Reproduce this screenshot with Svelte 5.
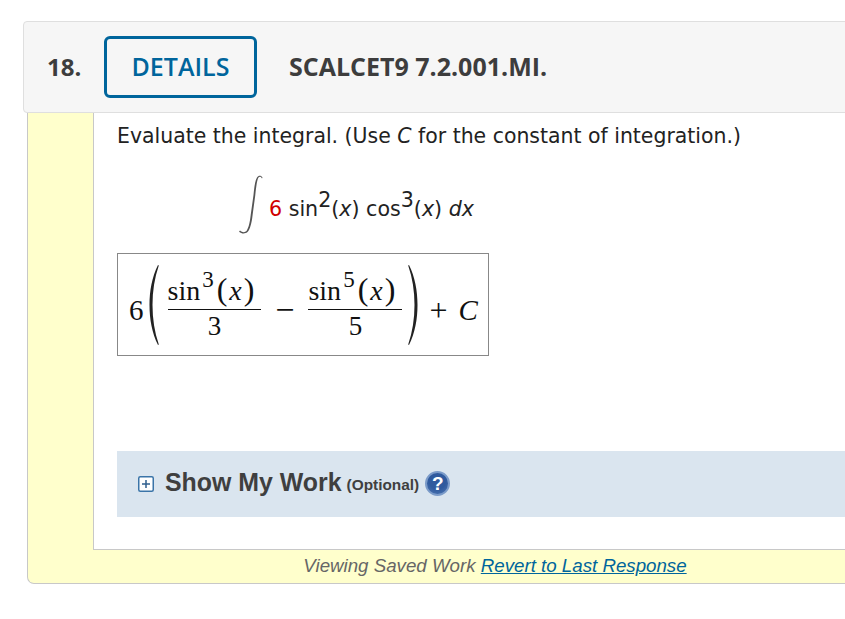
<script>
	const answer_fracs = [
		{ power: 3, denom: 3 },
		{ power: 5, denom: 5 }
	];
</script>

<div class="page">
	<header class="question_head">
		<span class="number">18.</span>
		<button type="button" class="details_btn">DETAILS</button>
		<span class="title">SCALCET9 7.2.001.MI.</span>
	</header>

	<section class="panel">
		<div class="body">
			<p class="prompt">Evaluate the integral. (Use <i>C</i> for the constant of integration.)</p>

			<div class="integral">
				<svg class="int_sign" width="32" height="62" viewBox="0 0 32 62" aria-hidden="true">
					<path d="M30.500 3.500C29 1 26.500 1.200 25 3.500 23 7 22.300 13 21.500 21L18.700 41C17.800 49 16.500 54 14.500 57 13 58.500 10.500 58.700 8 56.500L7 57.700C10 60 13 60 15.500 58 18 55.500 19.700 49 20.600 41L23.300 21C24.300 12 25 6 26.500 3.500 27.500 2.300 29 2.400 30 4.500z" fill="#555" />
				</svg>
				<span class="int_expr"><span class="red">6</span> sin<sup>2</sup>(<i>x</i>) cos<sup>3</sup>(<i>x</i>) <i>dx</i></span>
			</div>

			<div class="answer">
				<span class="m_num">6</span>
				<svg class="paren" width="10" height="80" viewBox="0 0 10 80" aria-hidden="true">
					<path d="M9 0C3 12 .500 26 .500 40S3 68 9 80l.800-.500C5.500 67 3.500 54 3.500 40S5.500 13 9.800.500z" fill="#222" />
				</svg>
				{#each answer_fracs as frac, i}
					{#if i > 0}<span class="m_minus">−</span>{/if}
					<span class="frac">
						<span class="frac_top">sin<sup>{frac.power}</sup><span class="m_paren">(</span><i>x</i><span class="m_paren">)</span></span>
						<span class="frac_bottom">{frac.denom}</span>
					</span>
				{/each}
				<svg class="paren right" width="10" height="80" viewBox="0 0 10 80" aria-hidden="true">
					<path d="M1 0C7 12 9.500 26 9.500 40S7 68 1 80l-.800-.500C4.500 67 6.500 54 6.500 40S4.500 13 .200.500z" fill="#222" />
				</svg>
				<span class="m_plus">+</span>
				<i class="m_c">C</i>
			</div>

			<div class="work_bar">
				<span class="plus_box">
					<svg width="16" height="16" viewBox="0 0 16 16" aria-hidden="true">
						<rect x="0.750" y="0.750" width="14.500" height="14.500" rx="1.500" fill="#fff" stroke="#3a74a8" stroke-width="1.500" />
						<path d="M4 8h8M8 4v8" stroke="#2f5f8f" stroke-width="1.500" fill="none" />
					</svg>
				</span>
				<span class="work_label">Show My Work</span>
				<span class="work_opt">(Optional)</span>
				<span class="help_icon">?</span>
			</div>
		</div>

		<div class="saved_note">
			<i>Viewing Saved Work</i> <a href="#revert">Revert to Last Response</a>
		</div>
	</section>
</div>

<style>
	:global(body) {
		margin: 0;
		background: #fff;
		overflow: hidden;
	}

	.page {
		width: 845px;
		height: 619px;
		overflow: hidden;
		padding-top: 21px;
		box-sizing: border-box;
	}

	.question_head {
		display: flex;
		align-items: center;
		box-sizing: border-box;
		width: 960px;
		height: 92px;
		margin-left: 23px;
		padding-left: 23px;
		background: #f6f6f6;
		border: 1px solid #dfdfdf;
		border-radius: 4px;
		font-family: "Open Sans", sans-serif;
		color: #3d3d3d;
	}

	.number {
		width: 57px;
		padding-bottom: 2px;
		font-size: 24px;
		font-weight: 700;
	}

	.details_btn {
		box-sizing: border-box;
		width: 153px;
		height: 62px;
		padding: 0 0 2px;
		background: transparent;
		border: 3px solid #00659c;
		border-radius: 6px;
		color: #00659c;
		font-family: inherit;
		font-size: 25px;
		font-weight: 600;
	}

	.title {
		margin-left: 32px;
		padding-bottom: 2px;
		font-size: 25px;
		font-weight: 700;
	}

	.panel {
		box-sizing: border-box;
		width: 936px;
		height: 471px;
		margin-left: 27px;
		background: #ffffcc;
		border: 1px solid #c8c8c8;
		border-top: 0;
		border-radius: 0 0 7px 7px;
	}

	.body {
		box-sizing: border-box;
		height: 437px;
		margin-left: 65px;
		padding: 11px 0 0 23px;
		background: #fff;
		border-left: 1px solid #c8c8c8;
		border-bottom: 1px solid #c8c8c8;
		font-family: "DejaVu Sans", sans-serif;
		color: #222;
	}

	.prompt {
		margin: 0;
		font-size: 20.460px;
		line-height: 24px;
	}

	.integral {
		display: flex;
		align-items: center;
		height: 62px;
		margin: 26px 0 0 115px;
	}

	.int_sign {
		margin-right: 5px;
	}

	.int_expr {
		font-size: 20.600px;
		line-height: 24px;
		padding-top: 8px;
	}

	.int_expr sup {
		font-size: 20.600px;
		line-height: 0;
		vertical-align: 9px;
	}

	.red {
		color: #d00000;
	}

	.answer {
		display: flex;
		align-items: center;
		box-sizing: border-box;
		width: 372px;
		height: 103px;
		margin-top: 17px;
		padding-left: 11px;
		border: 1px solid #888;
		font-family: "Liberation Serif", serif;
		font-size: 28px;
		color: #111;
	}

	.m_num {
		margin-top: 12px;
		font-size: 29px;
	}

	.paren {
		flex: none;
		margin: 0 9px 0 5px;
	}

	.paren.right {
		margin: 0 0 0 6px;
	}

	.m_minus {
		width: 47px;
		margin-top: 10px;
		font-size: 34px;
		text-align: center;
	}

	.frac {
		display: flex;
		flex-direction: column;
		align-items: flex-start;
		margin-top: 6px;
	}

	.frac_top {
		padding: 0 7px 1px 0;
		border-bottom: 1px solid #111;
		line-height: 34px;
		white-space: nowrap;
	}

	.frac_top sup {
		margin: 0 3px 0 2px;
		font-size: 23px;
		line-height: 0;
		vertical-align: 13px;
	}

	.frac_top i {
		padding: 0 2px;
	}

	.m_paren {
		font-size: 32px;
		line-height: 0;
	}

	.frac_bottom {
		align-self: center;
		line-height: 32px;
		font-size: 27px;
	}

	.m_plus {
		margin: 12px 0 0 11px;
		font-size: 32px;
	}

	.m_c {
		margin: 12px 0 0 11px;
		font-size: 29px;
	}

	.work_bar {
		display: flex;
		align-items: center;
		box-sizing: border-box;
		height: 66px;
		margin-top: 95px;
		padding: 0 0 4px 21px;
		background: #dae5ef;
		font-family: "Liberation Sans", sans-serif;
		font-weight: 700;
		color: #3f3f3f;
	}

	.plus_box {
		display: flex;
		margin: 4px 11px 0 0;
	}

	.work_label {
		font-size: 24.900px;
	}

	.work_opt {
		margin: 6px 0 0 5px;
		font-size: 15.400px;
	}

	.help_icon {
		display: flex;
		align-items: center;
		justify-content: center;
		box-sizing: border-box;
		width: 25px;
		height: 25px;
		margin: 3px 0 0 6px;
		border: 2px solid #7b9bc9;
		border-radius: 50%;
		background: radial-gradient(circle at 50% 35%, #2f5a9e 50%, #4f77b3 100%);
		color: #fff;
		font-size: 19px;
		line-height: 1;
	}

	.saved_note {
		height: 33px;
		font-family: "Liberation Sans", sans-serif;
		font-size: 18.720px;
		line-height: 32px;
		text-align: center;
		color: #666;
	}

	.saved_note a {
		color: #00659c;
		text-decoration: underline;
		font-style: italic;
	}
</style>
